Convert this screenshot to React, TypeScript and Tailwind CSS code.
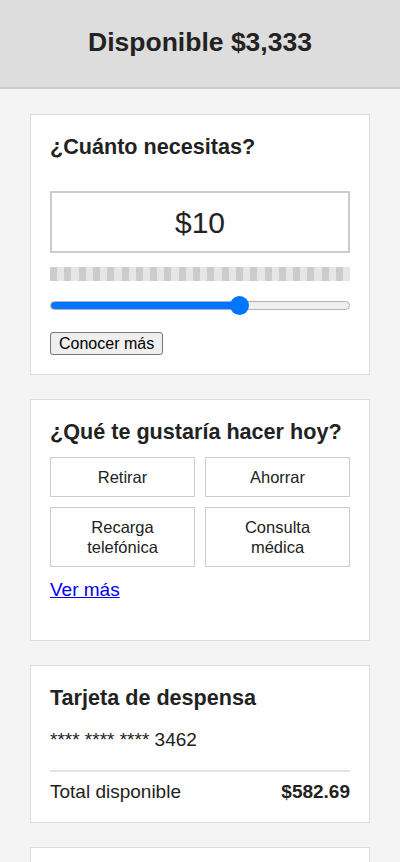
import { useState } from "react";

type ActionParameters = {
    label: string;
}

const Action = ({ label }: ActionParameters) => {
    return <button className="border border-[#ccc] bg-white px-[16px] py-[9px] text-center text-[16.5px] leading-[20px] text-[#222]">
        {label}
    </button>
}

const Card = ({ children, className }: { children: React.ReactNode; className?: string }) => {
    return <section className={"bg-white border border-[#ddd] px-[19px] " + (className ?? "")}>
        {children}
    </section>
}

const App = () => {
    const [amount, setAmount] = useState(64);

    return <div className="min-h-[862px] bg-[#f4f4f4] text-[#222]" style={{ fontFamily: '"Liberation Sans", Arial, sans-serif' }}>
        <header className="h-[89px] bg-[#ddd] border-b-2 border-[#ccc] flex items-center justify-center">
            <h1 className="text-[26.5px] font-bold pb-[1px]">Disponible $3,333</h1>
        </header>

        <main className="flex flex-col gap-[24px] px-[30px] pt-[25px]">
            {/* monto */}
            <Card className="pt-[20px] pb-[18px]">
                <h2 className="text-[21.6px] font-bold leading-[24px]">¿Cuánto necesitas?</h2>
                <div className="mt-[32px] h-[62px] border-2 border-[#ccc] flex items-center justify-center text-[30px]">$10</div>
                <div className="mt-[14px] h-[14px] bg-[repeating-linear-gradient(90deg,#cccccc_0_7px,#e6e6e6_7px_14.3px)]"></div>
                <input
                    type="range"
                    min={0}
                    max={100}
                    value={amount}
                    onChange={(e) => setAmount(Number(e.target.value))}
                    style={{ background: `linear-gradient(90deg, #0075ff ${amount}%, #efefef ${amount}%)` }}
                    className="block w-full mt-[20px] h-[9px] appearance-none rounded-full border border-[#b2b2b2] [&::-webkit-slider-thumb]:appearance-none [&::-webkit-slider-thumb]:w-[19px] [&::-webkit-slider-thumb]:h-[19px] [&::-webkit-slider-thumb]:rounded-full [&::-webkit-slider-thumb]:bg-[#0075ff]"
                />
                <button className="mt-[22px] border border-[#767676] bg-[#efefef] rounded-[3px] px-[8px] py-[1px] text-base leading-[19px] text-black">Conocer más</button>
            </Card>

            {/* acciones */}
            <Card className="pt-[20px] pb-[37px]">
                <h2 className="text-[21.6px] font-bold leading-[24px]">¿Qué te gustaría hacer hoy?</h2>
                <div className="grid grid-cols-2 gap-[10px] mt-[13px]">
                    <Action label="Retirar" />
                    <Action label="Ahorrar" />
                    <Action label="Recarga telefónica" />
                    <Action label="Consulta médica" />
                </div>
                <a href="#" className="inline-block mt-[11px] text-[19px] leading-[24px] text-[#0000ee] underline">Ver más</a>
            </Card>

            {/* tarjeta */}
            <Card className="pt-[20px] pb-[19px]">
                <h2 className="text-[21.6px] font-bold leading-[24px]">Tarjeta de despensa</h2>
                <div className="mt-[19px] text-[19px] leading-[22px]">**** **** **** 3462</div>
                <div className="mt-[19px] pt-[9px] border-t-2 border-[#e4e4e4] flex justify-between text-[19px] leading-[22px]">
                    <span>Total disponible</span>
                    <span className="font-bold">$582.69</span>
                </div>
            </Card>

            <Card className="h-[40px]">
                <div></div>
            </Card>
        </main>
    </div>
}

export default App;
